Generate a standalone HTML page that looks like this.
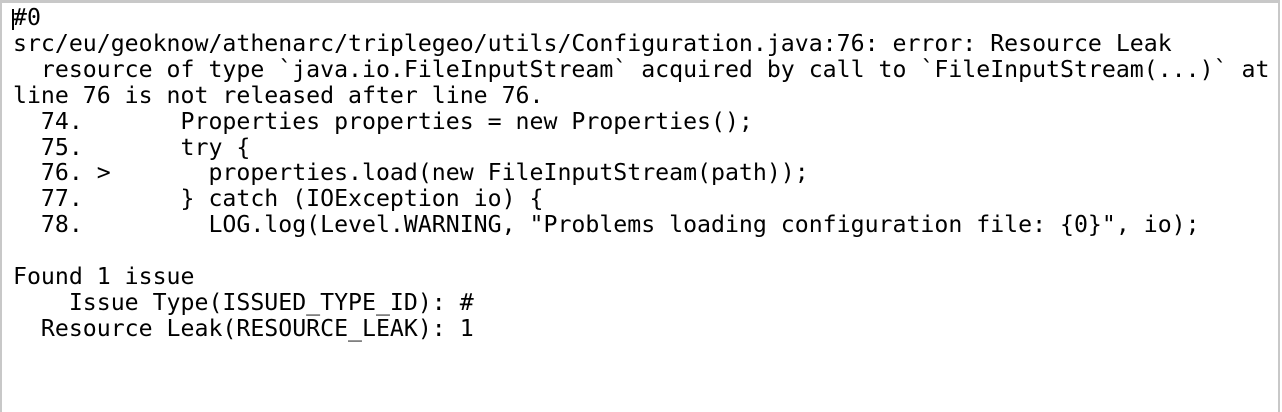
<!DOCTYPE html>
<html><head><meta charset="utf-8"><style>
html,body{margin:0;padding:0;background:#fff;}
body{width:1282px;height:412px;overflow:hidden;position:relative;}
.frame{position:absolute;left:0;top:0;width:1280px;height:412px;border-top:3px solid #c8c8c8;border-left:2px solid #c8c8c8;border-right:2px solid #c8c8c8;box-sizing:border-box;}
pre{position:absolute;left:13px;top:5px;margin:0;font-family:"DejaVu Sans Mono","Liberation Mono",monospace;font-size:23.2px;line-height:25.9px;color:#000;}
.cur{position:absolute;left:12px;top:9px;width:2px;height:21px;background:#000;}
</style></head><body>
<div class="frame"></div>
<pre>#0
src/eu/geoknow/athenarc/triplegeo/utils/Configuration.java:76: error: Resource Leak
  resource of type `java.io.FileInputStream` acquired by call to `FileInputStream(...)` at
line 76 is not released after line 76.
  74.       Properties properties = new Properties();
  75.       try {
  76. &gt;       properties.load(new FileInputStream(path));
  77.       } catch (IOException io) {
  78.         LOG.log(Level.WARNING, "Problems loading configuration file: {0}", io);

Found 1 issue
    Issue Type(ISSUED_TYPE_ID): #
  Resource Leak(RESOURCE_LEAK): 1</pre>
<div class="cur"></div>
</body></html>
